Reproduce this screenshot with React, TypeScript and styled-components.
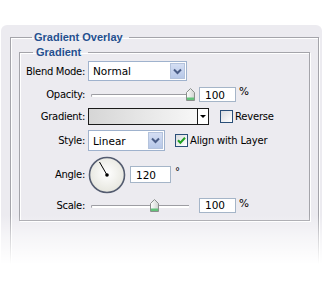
import React from "react";
import styled, { createGlobalStyle } from "styled-components";

const GlobalStyle = createGlobalStyle`
    html, body {
        margin: 0;
        background: #fff;
    }
    body {
        font-family: "DejaVu Sans", "Liberation Sans", sans-serif;
        font-size: 10px;
        color: #000;
    }
`;

function SliderThumb() {
    return (
        <svg width="9" height="13" viewBox="0 0 9 13">
            <defs>
                <linearGradient id="thumbFill" x1="0" y1="0" x2="1" y2="0">
                    <stop offset="0" stopColor="#ffffff" />
                    <stop offset="1" stopColor="#cfd3d0" />
                </linearGradient>
            </defs>
            <path d="M0.5 4.5 L4.5 0.5 L8.5 4.5 V12.5 H0.5 Z" fill="url(#thumbFill)" stroke="#8a8f8c" />
            <rect x="1" y="9.5" width="7" height="2.5" fill="#63c27a" />
        </svg>
    );
}

function Chevron() {
    return (
        <svg width="9" height="7" viewBox="0 0 9 7">
            <path d="M1 1.5 L4.5 5 L8 1.5" fill="none" stroke="#4a5d86" strokeWidth="2" />
        </svg>
    );
}

function Dial({ angle }: { angle: number }) {
    const rad = (angle * Math.PI) / 180;
    const x2 = 19 + Math.cos(rad) * 15;
    const y2 = 19 - Math.sin(rad) * 15;
    return (
        <svg width="38" height="38" viewBox="0 0 38 38">
            <defs>
                <radialGradient id="dialFill" cx="0.5" cy="0.45" r="0.55">
                    <stop offset="0" stopColor="#ffffff" />
                    <stop offset="1" stopColor="#e6e6de" />
                </radialGradient>
            </defs>
            <circle cx="19" cy="19" r="17.5" fill="url(#dialFill)" stroke="#545c70" strokeWidth="1.6" />
            <line x1="19" y1="19" x2={x2} y2={y2} stroke="#000" strokeWidth="1" />
            <circle cx="19" cy="19" r="1.8" fill="#000" />
        </svg>
    );
}

function CheckMark() {
    return (
        <svg width="11" height="11" viewBox="0 0 11 11">
            <path d="M2 5.2 L4.4 7.8 L9 2.8" fill="none" stroke="#21a121" strokeWidth="2" />
        </svg>
    );
}

function Select({ value, width, height }: { value: string; width: number; height: number }) {
    return (
        <SelectBox style={{ width, height }}>
            <SelectValue>{value}</SelectValue>
            <SelectButton>
                <Chevron />
            </SelectButton>
        </SelectBox>
    );
}

function Slider({ pct }: { pct: number }) {
    return (
        <SliderWrap>
            <Track />
            <Thumb style={{ left: 3 + pct * 96 - 1 }}>
                <SliderThumb />
            </Thumb>
        </SliderWrap>
    );
}

function Checkbox({ checked, label }: { checked?: boolean; label: string }) {
    return (
        <CheckLabel>
            <Box>{checked && <CheckMark />}</Box>
            {label}
        </CheckLabel>
    );
}

export default function App() {
    return (
        <>
            <GlobalStyle />
            <Page>
                <Panel>
                    <OuterGroup>
                        <Legend>Gradient Overlay</Legend>
                        <InnerGroup>
                            <InnerLegend>Gradient</InnerLegend>
                            <Form>
                                <Label>Blend Mode:</Label>
                                <Cell>
                                    <Select value="Normal" width={99} height={20} />
                                </Cell>

                                <Label>Opacity:</Label>
                                <Cell>
                                    <Slider pct={1} />
                                    <NumberInput $width={37} $height={15} $ml={3}>100</NumberInput>
                                    <Unit>%</Unit>
                                </Cell>

                                <Label>Gradient:</Label>
                                <Cell>
                                    <GradientPicker>
                                        <GradientPreview />
                                        <GradientArrow>
                                            <DownTriangle />
                                        </GradientArrow>
                                    </GradientPicker>
                                    <Spacer $w={11} />
                                    <Checkbox label="Reverse" />
                                </Cell>

                                <Label>Style:</Label>
                                <Cell>
                                    <Select value="Linear" width={77} height={21} />
                                    <Spacer $w={10} />
                                    <Checkbox checked label="Align with Layer" />
                                </Cell>

                                <Label>Angle:</Label>
                                <Cell>
                                    <Dial angle={120} />
                                    <NumberInput $width={41} $height={17} $ml={4}>120</NumberInput>
                                    <Degree>°</Degree>
                                </Cell>

                                <Label>Scale:</Label>
                                <Cell>
                                    <Slider pct={0.63} />
                                    <NumberInput $width={37} $height={15} $ml={3}>100</NumberInput>
                                    <Unit>%</Unit>
                                </Cell>
                            </Form>
                        </InnerGroup>
                    </OuterGroup>
                    <Fade />
                </Panel>
            </Page>
        </>
    );
}

const Page = styled.div`
    width: 326px;
    height: 285px;
    padding: 25px 4px 0 1px;
    box-sizing: border-box;
    overflow: hidden;
`;

const Panel = styled.div`
    position: relative;
    height: 260px;
    background: #ecebf0;
    border-radius: 6px 6px 0 0;
    padding: 6px 3px 0 9px;
    box-sizing: border-box;
`;

const OuterGroup = styled.fieldset`
    margin: 0;
    padding: 0 8px 0 8px;
    min-height: 270px;
    border: 1px solid #a4a4aa;
    box-shadow: inset 1px 1px 0 #fff, 1px 1px 0 #fff;
    box-sizing: border-box;
`;

const Legend = styled.legend`
    margin-left: 13px;
    padding: 0 6px 0 2px;
    font-family: "Liberation Sans", Arial, sans-serif;
    font-weight: bold;
    font-size: 11px;
    line-height: 13px;
    color: #25508f;
`;

const InnerGroup = styled.fieldset`
    margin: 2px 0 0 0;
    padding: 2px 0 7px 0;
    border: 1px solid #a4a4aa;
    box-shadow: inset 1px 1px 0 #fff, 1px 1px 0 #fff;
`;

const InnerLegend = styled(Legend)`
    margin-left: 13px;
    padding: 0 7px 0 3px;
`;

const Form = styled.div`
    display: grid;
    grid-template-columns: 65px auto;
    grid-template-rows: 20px 19px 17px 23px 37px 16px;
    column-gap: 3px;
    row-gap: 4px;
`;

const Label = styled.div`
    align-self: center;
    text-align: right;
    white-space: nowrap;
    letter-spacing: -0.3px;
`;

const Cell = styled.div`
    display: flex;
    align-items: center;
`;

const Spacer = styled.div<{ $w: number }>`
    width: ${(p) => p.$w}px;
    flex: none;
`;

const SelectBox = styled.div`
    display: flex;
    align-items: stretch;
    box-sizing: border-box;
    border: 1px solid #9fb2cd;
    background: #fff;
    padding: 1px;
    flex: none;
`;

const SelectValue = styled.div`
    flex: 1;
    display: flex;
    align-items: center;
    padding-left: 3px;
    font-size: 10.5px;
`;

const SelectButton = styled.div`
    width: 15px;
    display: flex;
    align-items: center;
    justify-content: center;
    box-sizing: border-box;
    border: 1px solid #b4c3dc;
    background: linear-gradient(#d4def3, #b7c8e8);
`;

const SliderWrap = styled.div`
    position: relative;
    width: 108px;
    height: 17px;
    flex: none;
`;

const Track = styled.div`
    position: absolute;
    left: 3px;
    top: 8px;
    width: 97px;
    height: 2px;
    border-top: 1px solid #9d9da3;
    border-left: 1px solid #9d9da3;
    border-radius: 2px 0 0 2px;
    background: #fff;
`;

const Thumb = styled.div`
    position: absolute;
    top: 2px;
    width: 9px;
    height: 13px;
    line-height: 0;
`;

const NumberInput = styled.div<{ $width: number; $height: number; $ml: number }>`
    width: ${(p) => p.$width}px;
    height: ${(p) => p.$height}px;
    margin-left: ${(p) => p.$ml}px;
    box-sizing: border-box;
    border: 1px solid #a5b5c8;
    background: #fff;
    padding-left: 5px;
    display: flex;
    align-items: center;
    font-size: 10.5px;
    flex: none;
`;

const Unit = styled.div`
    margin-left: 3px;
    align-self: flex-start;
    font-size: 10.5px;
`;

const Degree = styled.div`
    margin-left: 4px;
    align-self: flex-start;
    margin-top: 10px;
    font-size: 10px;
`;

const GradientPicker = styled.div`
    display: flex;
    width: 121px;
    height: 17px;
    box-sizing: border-box;
    border: 1px solid #1a1a1a;
    flex: none;
`;

const GradientPreview = styled.div`
    flex: 1;
    background: linear-gradient(90deg, #d6d6d6, #f7f7f7);
    border-right: 1px solid #1a1a1a;
`;

const GradientArrow = styled.div`
    width: 10px;
    background: #fff;
    display: flex;
    align-items: center;
    justify-content: center;
`;

const DownTriangle = styled.div`
    width: 0;
    height: 0;
    border-left: 3px solid transparent;
    border-right: 3px solid transparent;
    border-top: 3px solid #000;
`;

const CheckLabel = styled.div`
    display: flex;
    align-items: center;
    gap: 2px;
    white-space: nowrap;
    letter-spacing: -0.2px;
`;

const Box = styled.div`
    width: 13px;
    height: 13px;
    box-sizing: border-box;
    border: 1px solid #2a4f78;
    background: linear-gradient(135deg, #d9dce0, #ffffff);
    display: flex;
    align-items: center;
    justify-content: center;
`;

const Fade = styled.div`
    position: absolute;
    left: 0;
    right: 0;
    bottom: 0;
    height: 70px;
    pointer-events: none;
    background: linear-gradient(rgba(255, 255, 255, 0), rgba(255, 255, 255, 0.5) 30%, #fff 70%);
`;
